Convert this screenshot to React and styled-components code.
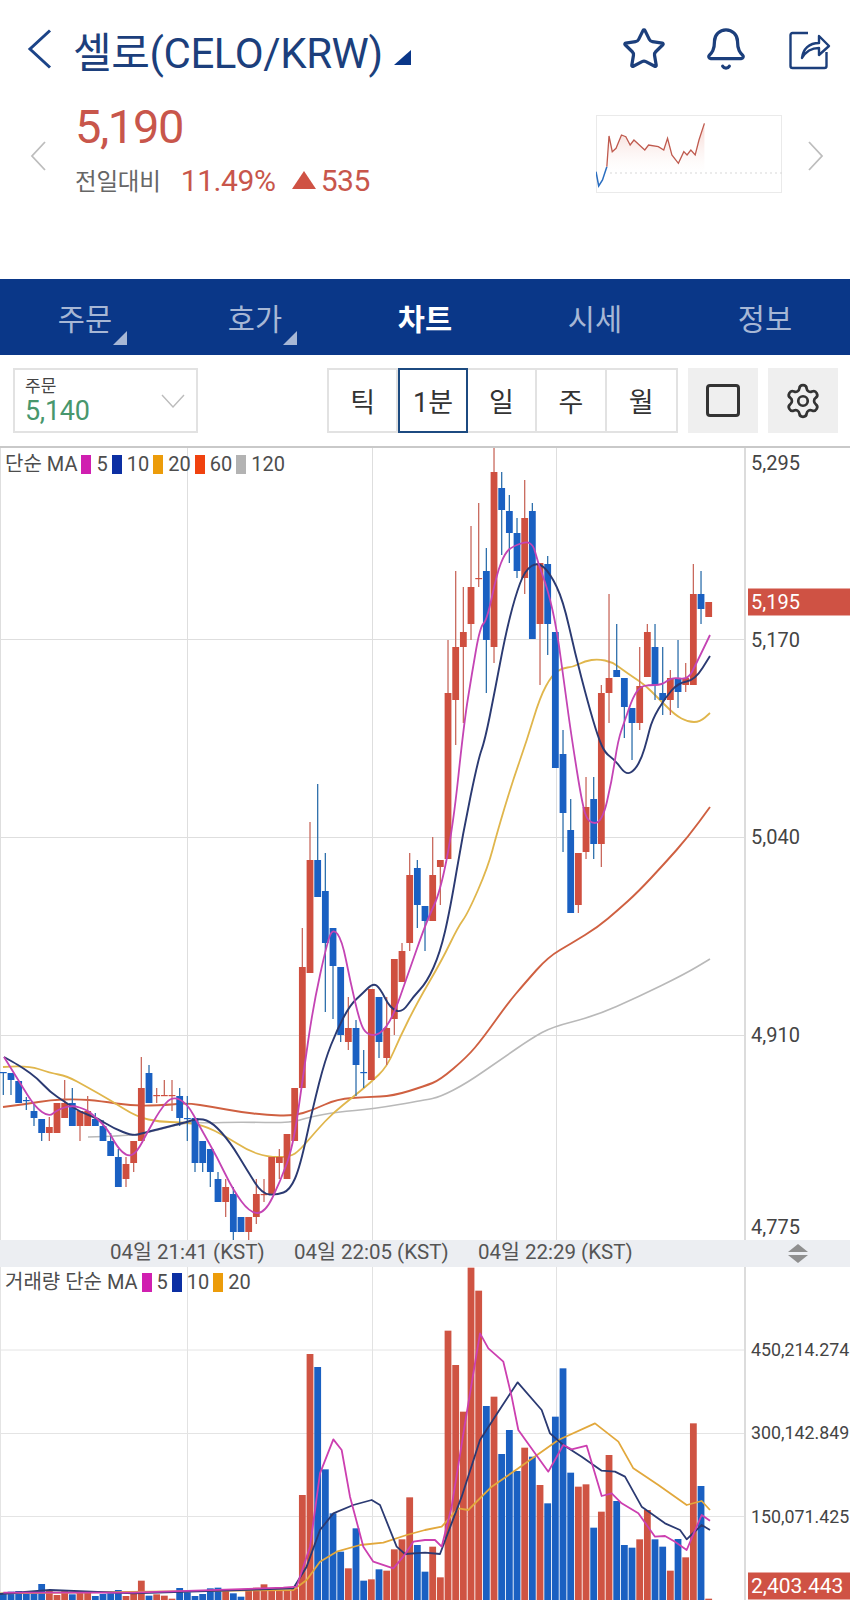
import styled, { createGlobalStyle } from "styled-components";
import { Star, Bell, Settings } from "lucide-react";

// page coords: index -> x center
const cx = (i) => 3.33 + 7.667 * i;

const R = "r";
const B = "b";
// [color, bodyTop, bodyBottom, wickTop, wickBottom]
const candles = [
  [B,1072,1073,1072,1095],[B,1073,1080,1073,1095],[B,1081,1103,1081,1103],[B,1100,1101,1097,1110],[B,1111,1118,1104,1126],
  [B,1119,1133,1119,1141],[R,1127,1133,1117,1141],[R,1103,1133,1103,1133],[R,1103,1118,1080,1118],[B,1103,1126,1088,1126],
  [R,1111,1126,1111,1141],[R,1111,1126,1096,1126],[B,1119,1126,1113,1126],[B,1126,1141,1120,1141],[B,1141,1156,1133,1156],
  [B,1157,1187,1149,1187],[R,1164,1179,1157,1187],[R,1141,1163,1141,1172],[R,1088,1141,1057,1141],[B,1073,1103,1065,1103],
  [R,1095,1096,1088,1103],[R,1095,1096,1080,1096],[R,1095,1096,1080,1111],[B,1096,1118,1088,1126],[B,1118,1119,1096,1141],
  [B,1118,1163,1118,1172],[B,1141,1163,1141,1172],[B,1149,1172,1149,1187],[B,1179,1202,1172,1202],[R,1187,1202,1179,1217],
  [B,1194,1232,1187,1240],[B,1217,1232,1217,1232],[R,1217,1232,1217,1240],[R,1194,1217,1179,1224],[R,1194,1195,1179,1202],
  [R,1157,1194,1157,1194],[R,1157,1163,1149,1179],[R,1134,1179,1134,1179],[R,1088,1141,1088,1141],[R,967,1088,928,1088],
  [R,860,973,822,973],[B,860,897,784,897],[B,891,943,853,1012],[B,928,966,928,1019],[B,967,1035,967,1042],
  [R,1028,1042,997,1050],[B,1028,1065,1020,1096],[B,1072,1073,1050,1088],[R,989,1080,989,1080],[B,997,1042,997,1058],
  [R,1028,1058,997,1065],[R,959,1019,959,1035],[R,951,982,943,982],[R,875,943,853,951],[B,868,905,860,928],
  [B,906,921,906,951],[R,875,921,837,921],[R,860,867,860,905],[R,693,859,640,859],[R,647,700,571,745],
  [R,632,647,587,723],[R,587,624,526,640],[R,578,579,503,587],[B,571,640,548,693],[R,472,647,448,663],
  [B,488,510,472,555],[B,511,533,495,563],[B,533,571,518,578],[R,518,578,480,594],[B,511,639,503,639],
  [R,563,624,563,685],[B,564,624,556,655],[B,632,768,632,768],[B,754,813,730,852],[B,830,913,799,913],
  [R,853,905,853,913],[R,807,852,777,859],[B,799,844,777,859],[R,693,844,685,867],[R,678,693,594,723],
  [B,670,677,624,677],[B,678,707,678,738],[B,708,723,708,760],[R,686,723,647,730],[R,632,677,624,677],
  [B,647,685,624,700],[B,693,700,647,715],[R,678,700,670,715],[B,678,692,640,708],[R,678,685,663,692],
  [R,594,685,564,685],[B,594,609,571,624],[R,602,617,602,617],
];

// volume tops read off a 3x crop: y = 1240 + top / 3
const volumes = [
  [B,1060],[B,1055],[B,1053],[B,1057],[B,1055],[B,1032],[R,1053],[R,1065],[R,1053],[B,1063],
  [R,1053],[R,1055],[B,1068],[B,1062],[B,1060],[B,1050],[R,1068],[R,1060],[R,1022],[B,1067],
  [R,1063],[R,1067],[R,1076],[B,1044],[B,1057],[B,1068],[B,1062],[B,1045],[B,1043],[R,1052],
  [B,1060],[B,1070],[R,1050],[R,1043],[R,1033],[R,1050],[R,1050],[R,1050],[R,1045],[R,765],
  [R,342],[B,381],[B,688],[B,820],[B,935],[R,985],[B,865],[B,1022],[R,1018],[B,988],
  [R,992],[R,928],[R,898],[R,772],[B,915],[B,995],[R,920],[R,1012],[R,272],[R,375],
  [R,515],[R,83],[R,152],[B,498],[R,470],[B,642],[B,570],[B,693],[R,623],[B,650],
  [R,735],[B,790],[B,530],[B,385],[B,698],[R,740],[R,733],[B,863],[R,815],[R,645],
  [B,783],[B,915],[B,923],[R,898],[R,810],[B,898],[B,920],[R,992],[B,897],[R,952],
  [R,550],[B,738],[R,1076],
];

const ma5 = [[4,1057],[20,1083],[35,1107],[49,1117],[57,1110],[72,1105],[87,1110],[93,1115],[107,1128],[117,1147],[128,1157],[137,1152],[147,1133],[160,1110],[172,1096],[187,1103],[200,1127],[217,1157],[233,1190],[250,1213],[265,1213],[280,1182],[293,1147],[303,1077],[313,1007],[327,943],[333,928],[342,940],[350,980],[360,1023],[367,1035],[380,1035],[393,1017],[407,977],[427,920],[440,893],[453,827],[464,723],[472,673],[480,627],[487,620],[497,573],[505,553],[513,546],[532,540],[538,563],[548,590],[557,630],[565,690],[572,740],[582,803],[588,823],[602,823],[612,780],[618,740],[625,720],[633,697],[640,687],[648,685],[662,685],[672,677],[688,680],[697,662],[710,635]];
const ma10 = [[4,1057],[13,1062],[23,1068],[37,1078],[50,1092],[65,1102],[80,1112],[97,1118],[113,1128],[133,1136],[143,1133],[183,1123],[200,1118],[213,1123],[230,1142],[247,1170],[262,1194],[277,1195],[290,1190],[300,1167],[313,1107],[325,1060],[337,1030],[350,1005],[363,993],[373,983],[380,988],[390,1008],[402,1013],[413,997],[427,982],[440,953],[450,910],[463,833],[478,760],[485,740],[495,690],[505,637],[515,597],[525,570],[538,562],[550,573],[563,600],[575,653],[588,703],[598,737],[605,753],[615,760],[626,775],[635,770],[642,757],[647,740],[652,720],[665,698],[678,683],[695,680],[710,656]];
const ma20 = [[3,1067],[27,1065],[50,1073],[67,1076],[87,1087],[110,1100],[137,1117],[160,1122],[180,1122],[203,1125],[227,1137],[247,1150],[267,1157],[290,1157],[300,1150],[317,1130],[333,1113],[353,1097],[370,1083],[387,1067],[400,1037],[417,1003],[442,960],[458,927],[468,913],[488,867],[497,833],[512,783],[527,740],[540,697],[552,675],[562,668],[573,667],[585,661],[598,659],[612,662],[623,670],[633,677],[645,685],[658,698],[675,715],[688,722],[700,722],[710,713]];
const ma60 = [[3,1107],[27,1104],[50,1100],[77,1099],[100,1101],[133,1106],[167,1105],[187,1103],[213,1107],[240,1112],[267,1115],[293,1116],[313,1110],[337,1099],[367,1097],[393,1096],[425,1086],[440,1080],[467,1057],[483,1038],[508,1003],[525,983],[548,957],[572,943],[598,927],[618,910],[638,892],[665,863],[688,837],[710,807]];
const ma120 = [[88,1137],[123,1136],[147,1133],[187,1122],[207,1123],[240,1122],[290,1123],[310,1117],[337,1112],[373,1109],[425,1100],[440,1097],[467,1083],[500,1060],[532,1038],[552,1027],[595,1016],[638,997],[685,974],[710,959]];

// volume lines, read off two 3x crops (left half and right half)
const vLeft = (pts) => pts.map(([x, y]) => [x / 3, 1240 + y / 3]);
const vRight = (pts) => pts.map(([x, y]) => [425 + x / 3, 1240 + y / 3]);
const vol5 = [...vLeft([[10,1058],[400,1058],[850,1043],[890,1040],[930,920],[960,700],[1000,598],[1025,630],[1050,770],[1090,920],[1120,965],[1180,985],[1210,950],[1240,905]]),...vRight([[0,900],[30,900],[50,920],[80,800],[120,550],[165,280],[190,325],[235,365],[260,470],[280,570],[330,640],[370,695],[415,615],[440,628],[485,617],[530,768],[560,760],[590,790],[640,820],[690,890],[720,888],[750,905],[785,930],[830,825],[855,842]])];
const vol10 = [...vLeft([[0,1062],[150,1050],[400,1060],[880,1045],[920,980],[960,870],[1000,820],[1060,795],[1115,780],[1140,795],[1190,920],[1215,942]]),...vRight([[0,938],[45,942],[110,770],[165,600],[210,530],[278,427],[350,510],[375,580],[415,615],[470,650],[530,692],[570,695],[600,710],[650,800],[720,850],[765,870],[785,898],[830,855],[855,870]])];
const vol20 = [...vLeft([[0,1060],[880,1050],[920,1020],[960,965],[1010,935],[1080,915],[1150,908],[1220,885]]),...vRight([[0,870],[50,860],[100,805],[130,810],[200,740],[280,685],[400,600],[510,550],[580,605],[625,685],[700,735],[785,795],[830,783],[855,810]])];

// sparkline read off a crop squeezed to 1.845x / 3x
const sp = (pts) => pts.map(([x, y]) => `${(x - 1100) / 1.845},${(y - 345) / 3}`).join(" ");
const sparkBlue = [[1100,515],[1105,558],[1112,540],[1120,500]];
const sparkRed = [[1120,500],[1124,408],[1130,455],[1137,445],[1147,405],[1155,410],[1163,435],[1170,420],[1190,450],[1197,435],[1215,440],[1225,450],[1232,415],[1240,465],[1252,490],[1262,455],[1268,465],[1275,450],[1283,465],[1290,420],[1300,370]];

const pts = (arr) => arr.map((p) => p.join(",")).join(" ");

// rounds the corners by curving through the midpoints
const smooth = (arr) => {
  let d = `M${arr[0][0]} ${arr[0][1]}`;
  for (let i = 1; i < arr.length - 1; i++) {
    const mx = (arr[i][0] + arr[i + 1][0]) / 2;
    const my = (arr[i][1] + arr[i + 1][1]) / 2;
    d += ` Q${arr[i][0]} ${arr[i][1]} ${mx} ${my}`;
  }
  const last = arr[arr.length - 1];
  return `${d} L${last[0]} ${last[1]}`;
};

const vGrid = [187.5, 372.5, 556.5];

const tabs = [
  { label: "주문", mark: true },
  { label: "호가", mark: true },
  { label: "차트", active: true },
  { label: "시세" },
  { label: "정보" },
];
const periods = ["틱", "1분", "일", "주", "월"];
const priceLegend = [["5", "#d01fb0"], ["10", "#0c2fa3"], ["20", "#ec9c0a"], ["60", "#f0420f"], ["120", "#b3b3b3"]];

function SmoothLines({ list }) {
  return list.map(([data, color, w]) => (
    <path key={color} d={smooth(data)} fill="none" stroke={color} strokeWidth={w} />
  ));
}

function Lines({ list }) {
  return list.map(([data, color, w]) => (
    <polyline key={color} points={pts(data)} fill="none" stroke={color} strokeWidth={w} strokeLinejoin="round" />
  ));
}

export default function App() {
  return (
    <Page>
      <GlobalStyle />
      <Header>
        <BackIcon width="25" height="40" viewBox="0 0 25 40">
          <polyline points="23,1.5 3,20 23,38.5" fill="none" stroke="#1c4488" strokeWidth="3" />
        </BackIcon>
        <Title>셀로(CELO/KRW)</Title>
        <TitleMark />
        <HeaderIcons>
          <Star size={46} color="#1c3f7c" strokeWidth={1.7} />
          <Bell size={46} color="#1c3f7c" strokeWidth={1.7} />
          <svg width="42" height="42" viewBox="0 0 42 42" fill="none" stroke="#1c3f7c" strokeWidth="2.4">
            <path d="M19 5H3.5a2 2 0 0 0-2 2v31a2 2 0 0 0 2 2h32a2 2 0 0 0 2-2V24" />
            <path d="M13 30c1-9 7-15 17-15V8l10 10-10 9v-7c-7 0-13 3-17 10z" strokeLinejoin="round" />
          </svg>
        </HeaderIcons>
      </Header>

      <PriceRow>
        <SideArrow width="16" height="30" viewBox="0 0 16 30">
          <polyline points="15,1 2,15 15,29" fill="none" stroke="#bdbdbd" strokeWidth="1.8" />
        </SideArrow>
        <PriceBlock>
          <Price>5,190</Price>
          <ChangeRow>
            <ChangeLabel>전일대비</ChangeLabel>
            <ChangeValue>11.49%</ChangeValue>
            <UpMark />
            <ChangeValue>535</ChangeValue>
          </ChangeRow>
        </PriceBlock>
        <Spark width="186" height="78" viewBox="0 0 186 78">
          <defs>
            <linearGradient id="sparkFill" x1="0" y1="0" x2="0" y2="1">
              <stop offset="0" stopColor="#f3c9c2" stopOpacity="0.8" />
              <stop offset="1" stopColor="#fff" stopOpacity="0.2" />
            </linearGradient>
          </defs>
          <rect x="0.5" y="0.5" width="185" height="77" fill="#fff" stroke="#eaeaea" />
          <polygon points={`${sp(sparkRed)} ${(1300 - 1100) / 1.845},58 ${(1120 - 1100) / 1.845},58`} fill="url(#sparkFill)" />
          <line x1="14" y1="58" x2="186" y2="58" stroke="#d8d8d8" strokeWidth="1.2" strokeDasharray="2 3" />
          <polyline points={sp(sparkBlue)} fill="none" stroke="#2a6ec0" strokeWidth="1.5" />
          <polyline points={sp(sparkRed)} fill="none" stroke="#bf5a4e" strokeWidth="1.3" />
        </Spark>
        <NextArrow width="16" height="30" viewBox="0 0 16 30">
          <polyline points="1,1 14,15 1,29" fill="none" stroke="#bdbdbd" strokeWidth="1.8" />
        </NextArrow>
      </PriceRow>

      <NavBar>
        {tabs.map((t) => (
          <NavItem key={t.label} $active={t.active}>
            {t.label}
            {t.mark && <NavMark />}
          </NavItem>
        ))}
      </NavBar>

      <Toolbar>
        <OrderSelect>
          <OrderText>
            <OrderLabel>주문</OrderLabel>
            <OrderPrice>5,140</OrderPrice>
          </OrderText>
          <svg width="24" height="14" viewBox="0 0 24 14">
            <polyline points="1,1 12,13 23,1" fill="none" stroke="#bcbcbc" strokeWidth="1.4" />
          </svg>
        </OrderSelect>
        <Periods>
          {periods.map((p) => (
            <PeriodButton key={p} $selected={p === "1분"}>{p}</PeriodButton>
          ))}
        </Periods>
        <ToolButton>
          <SquareIcon />
        </ToolButton>
        <ToolButton>
          <Settings size={38} color="#333" strokeWidth={1.7} />
        </ToolButton>
      </Toolbar>

      <MainChart>
        <Plot>
          <svg width="745" height="792" viewBox="0 448 745 792">
            <line x1="0.5" y1="448" x2="0.5" y2="1240" stroke="#dedede" />
            {vGrid.map((x) => (
              <line key={x} x1={x} y1="448" x2={x} y2="1240" stroke="#dedede" />
            ))}
            {[639.5, 837.5, 1035.5].map((y) => (
              <line key={y} x1="0" y1={y} x2="745" y2={y} stroke="#dedede" />
            ))}
            <SmoothLines list={[[ma120, "#b9b9b9", 1.6], [ma60, "#cf6041", 1.9], [ma20, "#e0b64c", 1.8]]} />
            {candles.map(([c, top, bottom, wt, wb], i) => (
              <g key={i}>
                <line x1={cx(i)} x2={cx(i)} y1={wt} y2={wb} stroke={c === R ? "#c9695d" : "#2f70ac"} strokeWidth="1.3" />
                <rect x={cx(i) - 3.4} y={top} width="6.8" height={Math.max(bottom - top, 1.2)} fill={c === R ? "#cf4f3f" : "#1a60c2"} />
              </g>
            ))}
            <SmoothLines list={[[ma10, "#2b3a72", 1.9], [ma5, "#c444b4", 1.8]]} />
          </svg>
          <Legend $top={6}>
            <LegendText>단순 MA</LegendText>
            {priceLegend.map(([label, color]) => (
              <LegendItem key={label}>
                <Swatch $color={color} />
                <LegendText>{label}</LegendText>
              </LegendItem>
            ))}
          </Legend>
        </Plot>
        <Axis>
          <AxisLabel $y={15}>5,295</AxisLabel>
          <AxisBadge $y={154}>5,195</AxisBadge>
          <AxisLabel $y={192}>5,170</AxisLabel>
          <AxisLabel $y={389}>5,040</AxisLabel>
          <AxisLabel $y={587}>4,910</AxisLabel>
          <AxisLabel $y={779}>4,775</AxisLabel>
        </Axis>
      </MainChart>

      <TimeBar>
        <TimeLabel>04일 21:41 (KST)</TimeLabel>
        <TimeLabel>04일 22:05 (KST)</TimeLabel>
        <TimeLabel>04일 22:29 (KST)</TimeLabel>
        <ResizeIcon width="22" height="19" viewBox="0 0 22 19">
          <polygon points="11,0 21,8 1,8" fill="#8f8f8f" />
          <polygon points="1,11 21,11 11,19" fill="#8f8f8f" />
        </ResizeIcon>
      </TimeBar>

      <VolumeChart>
        <Plot>
          <svg width="745" height="333" viewBox="0 1267 745 333">
            <line x1="0.5" y1="1267" x2="0.5" y2="1600" stroke="#e4e4e4" />
            {vGrid.map((x) => (
              <line key={x} x1={x} y1="1267" x2={x} y2="1600" stroke="#e2e2e2" />
            ))}
            {[1350, 1433.5, 1516.5].map((y) => (
              <line key={y} x1="0" y1={y} x2="745" y2={y} stroke="#e4e4e4" />
            ))}
            {volumes.map(([c, t], i) => (
              <rect key={i} x={cx(i) - 3.4} y={1240 + t / 3} width="6.8" height={360 - t / 3} fill={c === R ? "#cf5443" : "#1a60c2"} />
            ))}
            <Lines list={[[vol20, "#e2a83c", 1.8], [vol10, "#2b3a72", 1.8], [vol5, "#cc3fb0", 1.8]]} />
          </svg>
          <Legend $top={5}>
            <LegendText>거래량 단순 MA</LegendText>
            {priceLegend.slice(0, 3).map(([label, color]) => (
              <LegendItem key={label}>
                <Swatch $color={color} />
                <LegendText>{label}</LegendText>
              </LegendItem>
            ))}
          </Legend>
        </Plot>
        <Axis>
          <VolumeLabel $y={83}>450,214.274</VolumeLabel>
          <VolumeLabel $y={166}>300,142.849</VolumeLabel>
          <VolumeLabel $y={250}>150,071.425</VolumeLabel>
          <VolumeBadge $y={319}>2,403.443</VolumeBadge>
        </Axis>
      </VolumeChart>
    </Page>
  );
}

const GlobalStyle = createGlobalStyle`
  html, body { margin: 0; padding: 0; background: #fff; }
  body { font-family: Roboto, "Noto Sans CJK KR", sans-serif; }
`;

const Page = styled.div`
  width: 850px;
  height: 1600px;
  overflow: hidden;
  display: flex;
  flex-direction: column;
  background: #fff;
  font-family: Roboto, "Noto Sans CJK KR", sans-serif;
`;

const Header = styled.div`
  height: 98px;
  display: flex;
  align-items: center;
  padding: 0 19px 0 27px;
  box-sizing: border-box;
`;

const BackIcon = styled.svg`
  flex: none;
`;

const Title = styled.div`
  margin-left: 21px;
  font-size: 42px;
  letter-spacing: -0.4px;
  color: #1c3f7c;
  white-space: nowrap;
`;

const TitleMark = styled.div`
  width: 0;
  height: 0;
  margin: 17px 0 0 11px;
  border-left: 17px solid transparent;
  border-bottom: 15px solid #0a3788;
`;

const HeaderIcons = styled.div`
  margin-left: auto;
  display: flex;
  align-items: center;
  gap: 40px;
  svg:first-child { margin-right: -4px; }
`;

const PriceRow = styled.div`
  height: 181px;
  display: flex;
  align-items: flex-start;
  padding: 0 26px 0 30px;
  box-sizing: border-box;
`;

const SideArrow = styled.svg`
  flex: none;
  margin-top: 43px;
`;

const NextArrow = styled(SideArrow)`
  margin-left: 26px;
`;

const PriceBlock = styled.div`
  margin-left: 29px;
  display: flex;
  flex-direction: column;
`;

const Price = styled.div`
  margin-top: 4px;
  font-size: 47px;
  line-height: 50px;
  letter-spacing: -1.4px;
  color: #c8564b;
`;

const ChangeRow = styled.div`
  margin-top: 10px;
  display: flex;
  align-items: center;
  height: 36px;
`;

const ChangeLabel = styled.span`
  font-size: 23.5px;
  color: #666;
  margin-right: 20px;
  letter-spacing: -0.2px;
`;

const ChangeValue = styled.span`
  font-size: 30px;
  color: #c8564b;
  letter-spacing: -0.4px;
`;

const UpMark = styled.span`
  width: 0;
  height: 0;
  margin: 0 5px 0 16px;
  border-left: 12px solid transparent;
  border-right: 12px solid transparent;
  border-bottom: 18px solid #cf5244;
`;

const Spark = styled.svg`
  flex: none;
  margin: 17px 0 0 auto;
`;

const NavBar = styled.div`
  height: 76px;
  flex: none;
  display: grid;
  grid-template-columns: repeat(5, 170px);
  background: #0a3788;
`;

const NavItem = styled.div`
  position: relative;
  display: flex;
  align-items: center;
  justify-content: center;
  font-size: 29.5px;
  font-weight: ${(p) => (p.$active ? 700 : 400)};
  color: ${(p) => (p.$active ? "#fff" : "#a7b7d5")};
`;

const NavMark = styled.span`
  position: absolute;
  left: 113px;
  top: 52px;
  width: 0;
  height: 0;
  border-left: 14px solid transparent;
  border-bottom: 14px solid #a7b7d5;
`;

const Toolbar = styled.div`
  height: 91px;
  flex: none;
  box-sizing: border-box;
  padding: 13px 12px 0 13px;
  display: flex;
  align-items: flex-start;
`;

const OrderSelect = styled.div`
  width: 185px;
  height: 65px;
  box-sizing: border-box;
  border: 2px solid #e2e2e2;
  display: flex;
  align-items: center;
  justify-content: space-between;
  padding: 0 11px 0 10px;
`;

const OrderText = styled.div`
  display: flex;
  flex-direction: column;
`;

const OrderLabel = styled.span`
  font-size: 17px;
  line-height: 20px;
  color: #444;
`;

const OrderPrice = styled.span`
  font-size: 27px;
  line-height: 30px;
  letter-spacing: -0.3px;
  color: #48976d;
`;

const Periods = styled.div`
  margin-left: 129px;
  display: grid;
  grid-template-columns: repeat(5, 69.4px);
  height: 65px;
  box-sizing: border-box;
  border: 2px solid #e2e2e2;
`;

const PeriodButton = styled.div`
  display: flex;
  align-items: center;
  justify-content: center;
  box-sizing: border-box;
  font-size: 27px;
  color: #333;
  margin: ${(p) => (p.$selected ? "-2px 0" : "0")};
  border: ${(p) => (p.$selected ? "2px solid #1c4a80" : "none")};
  border-right: ${(p) => (p.$selected ? "2px solid #1c4a80" : "2px solid #e2e2e2")};
  &:last-child { border-right: none; }
`;

const ToolButton = styled.div`
  width: 70px;
  height: 65px;
  margin-left: 10px;
  background: #efefef;
  display: flex;
  align-items: center;
  justify-content: center;
`;

const SquareIcon = styled.div`
  width: 34px;
  height: 33px;
  box-sizing: border-box;
  border: 3px solid #333;
  border-radius: 4px;
`;

const MainChart = styled.div`
  height: 794px;
  flex: none;
  box-sizing: border-box;
  border-top: 2px solid #c9c9c9;
  display: grid;
  grid-template-columns: 745px 105px;
`;

const VolumeChart = styled.div`
  height: 333px;
  flex: none;
  display: grid;
  grid-template-columns: 745px 105px;
`;

const Plot = styled.div`
  position: relative;
  svg { display: block; }
`;

const Legend = styled.div`
  position: absolute;
  left: 5px;
  top: ${(p) => p.$top}px;
  display: flex;
  align-items: center;
  gap: 4px;
`;

const LegendItem = styled.div`
  display: flex;
  align-items: center;
  gap: 5px;
`;

const LegendText = styled.span`
  font-size: 20px;
  line-height: 20px;
  color: #4d4d4d;
  white-space: nowrap;
`;

const Swatch = styled.span`
  width: 10px;
  height: 19px;
  background: ${(p) => p.$color};
`;

const Axis = styled.div`
  position: relative;
  overflow: hidden;
  border-left: 2px solid #dcdcdc;
  margin-left: -1px;
`;

const AxisLabel = styled.span`
  position: absolute;
  left: 5px;
  top: ${(p) => p.$y}px;
  transform: translateY(-50%);
  font-size: 20px;
  line-height: 24px;
  color: #444;
  white-space: nowrap;
`;

const AxisBadge = styled(AxisLabel)`
  left: 2px;
  width: 110px;
  height: 27px;
  line-height: 27px;
  padding-left: 3px;
  background: #cf5244;
  color: #fff;
`;

const VolumeLabel = styled(AxisLabel)`
  font-size: 17.8px;
`;

const VolumeBadge = styled(AxisBadge)`
  font-size: 21px;
`;

const TimeBar = styled.div`
  height: 27px;
  flex: none;
  background: #eceef2;
  display: grid;
  grid-template-columns: repeat(3, 184px) auto;
  align-items: center;
  padding-left: 110px;
`;

const TimeLabel = styled.span`
  font-size: 20.5px;
  line-height: 27px;
  height: 27px;
  margin-top: -2px;
  color: #555;
  white-space: nowrap;
`;

const ResizeIcon = styled.svg`
  justify-self: end;
  margin-right: 41px;
`;
